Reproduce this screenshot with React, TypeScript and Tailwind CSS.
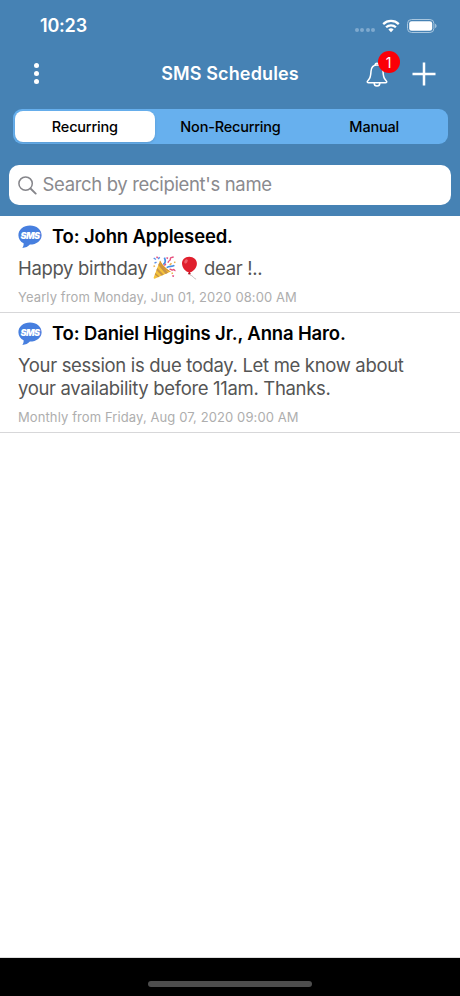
import React from 'react'

interface Schedule {
  id: number
  recipients: string
  message: React.ReactNode
  timing: string
}

const tabs = ['Recurring', 'Non-Recurring', 'Manual']

/* ***** Icons ***** */
const WifiIcon = () => (
  <svg className="h-[14px] w-[18px]" viewBox="0 0 18 14" fill="none" stroke="#fff" strokeWidth="2.3">
    <path d="M1.2 5.1a11.2 11.2 0 0 1 15.6 0" />
    <path d="M4.1 8.3a7 7 0 0 1 9.8 0" />
    <path d="M9 13.2 6.4 10.5a3.9 3.9 0 0 1 5.2 0Z" fill="#fff" stroke="none" />
  </svg>
)

const BatteryIcon = () => (
  <svg className="h-[14px] w-[30px]" viewBox="0 0 30 14">
    <rect x="0.5" y="0.5" width="26.4" height="13" rx="4" fill="none" stroke="#a9c7df" />
    <rect x="2.2" y="2.2" width="23" height="9.6" rx="2.4" fill="#fff" />
    <path d="M28.1 4.8c1.9.7 1.9 3.7 0 4.4Z" fill="#a9c7df" />
  </svg>
)

const BellIcon = () => (
  <svg
    className="h-[26px] w-[22px]"
    viewBox="0 0 22 26"
    fill="none"
    stroke="#fff"
    strokeWidth="1.5"
    strokeLinecap="round"
    strokeLinejoin="round"
  >
    <path d="M9.2 4.1a1.8 1.8 0 1 1 3.6 0" />
    <path d="M11 4C7.3 4 5.2 6.6 5 10.4c-.2 4-.5 6-2 7.9-.8 1-1.8 1.7-1.8 2.5 0 .6.5.9 1.2.9h17.2c.7 0 1.2-.3 1.2-.9 0-.8-1-1.5-1.8-2.5-1.5-1.9-1.8-3.9-2-7.9C16.8 6.6 14.7 4 11 4Z" />
    <path d="M8.2 22.2a2.8 2.8 0 0 0 5.6 0" />
  </svg>
)

const PlusIcon = () => (
  <svg className="h-6 w-6" viewBox="0 0 24 24" stroke="#fff" strokeWidth="2.5">
    <path d="M12 0.5v23M0.5 12h23" />
  </svg>
)

const SearchIcon = () => (
  <svg
    className="h-[19px] w-[19px]"
    viewBox="0 0 19 19"
    fill="none"
    stroke="#85858a"
    strokeWidth="1.5"
    strokeLinecap="round"
  >
    <circle cx="7.6" cy="7.6" r="6.7" />
    <path d="m12.5 12.5 5.2 5.1" strokeWidth="1.9" />
  </svg>
)

const SmsIcon = () => (
  <svg className="h-6 w-6 shrink-0 overflow-visible" viewBox="0 0 24 24">
    <path
      d="M12 .6C5.5.6.4 4.8.4 10.2c0 3.5 2 6.5 5.2 8.1.2 1.8-.3 3.3-1.3 4.8 3.3-.3 5.9-1.5 7.6-3.5 6.6 0 11.7-4 11.7-9.4C23.6 4.8 18.5.6 12 .6Z"
      fill="#477fdf"
    />
    <text
      x="11.9"
      y="13.6"
      textAnchor="middle"
      fontFamily="Inter, sans-serif"
      fontSize="9"
      fontWeight="900"
      fontStyle="italic"
      letterSpacing="-0.6"
      fill="#fff"
    >
      SMS
    </text>
  </svg>
)

const PartyPopper = () => (
  <svg className="-my-px inline-block h-6 w-6 align-top" viewBox="0 0 24 24" fill="none">
    <path d="M8 4.5 1.8 21.3c-.4 1.2.3 1.7 1.4 1.2L19 15.5C15.5 14.5 10 9.5 8 4.5Z" fill="#f5c33b" />
    <path d="m6.3 9 7.3 8.9 2.6-1.2L7.2 6.7ZM4.4 14.3l5.3 5.3 2.1-.9-6.6-6.7ZM2.8 18.6l3.3 2.6 1.3-.6-4-3.7Z" fill="#c79448" />
    <path d="M8 4.5c-1.6 3.7 6.3 12.3 11 11-2.5-1-8.5-6-11-11Z" fill="#db9630" />
    <path d="M11.3 8.5c2.4-1.5 2.3-4.2 1.1-6.9M14.7 11.6c3-2 5.1-.5 7.7-2.2" stroke="#468ee4" strokeWidth="1.7" />
    <path d="M16.2 6.8c-.5-2.5 2.6-1.6 2.2-3.9s2.4-.7 3.2-2.2M17.5 13.5c1.5-1.2 2 1.3 3.5.3s1.3 1.3 2.4.6" stroke="#e6517e" strokeWidth="1.4" />
    <path d="m1.7 2 2.2 1.5M2.5 7.2l2-1M7.7 1.3 6.1 3" stroke="#5b8fe7" strokeWidth="1.5" />
    <path d="m4.6.7 1 1.5M14.5 1.7l1.5.8M12.4 9.6l1.4-1.9M20.3 19.7l1.7.5" stroke="#e34f84" strokeWidth="1.5" />
    <path d="m17.8 9 1.7-1.8M22 6.6l1.4-.6M19.5 17.5l1.4-.5M1.5 10.5l1.5-.7" stroke="#eab04b" strokeWidth="1.4" />
  </svg>
)

const Balloon = () => (
  <svg className="-my-px -mr-[2.5px] ml-[1.5px] inline-block h-6 w-6 align-top" viewBox="0 0 24 24" fill="none">
    <path d="M11.3 17.3c-.3 2.4 2.5 1.7 3.6 3.3.8 1.1 1.5 2 3.2 2.5" stroke="#b8b0b0" strokeWidth="0.8" />
    <path d="M11.2.7C6.8.7 3.9 3.7 4 7.6c.1 4.2 3.8 8.8 7.2 8.8s7.600-4.200 7.700-8.600C19 3.700 15.700.7 11.200.7Z" fill="#e01f2d" />
    <path d="m11 16-1.2 2.2h3.1L11.9 16Z" fill="#b91523" />
    <ellipse cx="8" cy="5.4" rx="1.5" ry="2.2" transform="rotate(35 8 5.4)" fill="#f0606a" />
  </svg>
)

const schedules: Schedule[] = [
  {
    id: 1,
    recipients: 'John Appleseed.',
    message: (
      <>
        Happy birthday <PartyPopper />
        <Balloon /> dear !..
      </>
    ),
    timing: 'Yearly from Monday, Jun 01, 2020 08:00 AM',
  },
  {
    id: 2,
    recipients: 'Daniel Higgins Jr., Anna Haro.',
    message: (
      <>
        Your session is due today. Let me know about
        <br />
        your availability before 11am. Thanks.
      </>
    ),
    timing: 'Monthly from Friday, Aug 07, 2020 09:00 AM',
  },
]

const StatusBar = () => (
  <div className="flex h-[51px] items-center pr-[23px] pl-10">
    <span className="text-[18px] font-semibold tracking-[-0.2px]">10:23</span>
    <div className="ml-auto flex items-center">
      <div className="mt-[8px] mr-[7px] flex gap-[1.5px]">
        {[0, 1, 2, 3].map((dot) => (
          <span key={dot} className="size-[4px] rounded-full bg-[#7fa9ce]" />
        ))}
      </div>
      <WifiIcon />
      <div className="ml-[7px]">
        <BatteryIcon />
      </div>
    </div>
  </div>
)

const NavBar = () => (
  <div className="grid h-[45px] grid-cols-[120px_1fr_120px] items-center">
    <button className="ml-[34px] flex w-[5px] flex-col gap-[3px]" aria-label="Menu">
      <span className="size-[5px] rounded-full bg-white" />
      <span className="size-[5px] rounded-full bg-white" />
      <span className="size-[5px] rounded-full bg-white" />
    </button>
    <h1 className="text-center text-[18px] font-semibold tracking-[0.12px]">SMS Schedules</h1>
    <div className="flex items-center justify-end gap-[24px] pr-6">
      <button className="relative" aria-label="Notifications">
        <BellIcon />
        <span className="absolute -top-[9.5px] left-[11.5px] flex size-[22px] items-center justify-center rounded-full bg-[#fb0007] text-[14px]">
          1
        </span>
      </button>
      <button aria-label="Add schedule">
        <PlusIcon />
      </button>
    </div>
  </div>
)

const ScheduleRow = ({ recipients, message, timing }: Schedule) => (
  <li className="border-b border-[#d7d7d9] pt-[9px] pr-4 pb-[6px] pl-[18px]">
    <div className="flex h-6 items-center gap-[10px]">
      <SmsIcon />
      <h2 className="text-[18.5px] font-semibold tracking-[-0.15px] text-black">To: {recipients}</h2>
    </div>
    <p className="mt-[8px] text-[18.5px] leading-[22.5px] tracking-[-0.33px] whitespace-nowrap text-[#555]">
      {message}
    </p>
    <p className="mt-[8.5px] text-[13px] leading-[18px] tracking-[0.1px] text-[#aeaeae]">{timing}</p>
  </li>
)

const App = () => {
  return (
    <div className="flex h-[996px] w-[460px] flex-col overflow-hidden bg-white font-['Inter',sans-serif]">
      <header className="h-[216px] shrink-0 bg-[#4682b4] text-white">
        <StatusBar />
        <NavBar />

        {/* ***** Segmented control ***** */}
        <div className="mt-[13px] ml-[13px] grid h-[35px] w-[435px] grid-cols-3 rounded-[9px] bg-[#67b0ee] p-[2px] text-[14.5px] font-medium tracking-[-0.2px] text-black">
          {tabs.map((tab, index) => (
            <button
              key={tab}
              className={
                index === 0
                  ? 'mr-[4px] rounded-[8px] bg-white shadow-sm'
                  : 'rounded-[8px]'
              }
            >
              {tab}
            </button>
          ))}
        </div>

        {/* ***** Search ***** */}
        <div className="mx-[9px] mt-[21px] flex h-10 items-center gap-[6px] rounded-[10px] bg-white pl-[8.5px]">
          <SearchIcon />
          <span className="text-[18.5px] tracking-[-0.34px] text-[#8a8a8e]">Search by recipient's name</span>
        </div>
      </header>

      <ul className="flex-1">
        {schedules.map((schedule) => (
          <ScheduleRow key={schedule.id} {...schedule} />
        ))}
      </ul>

      {/* ***** Home indicator ***** */}
      <footer className="flex h-[39px] shrink-0 justify-center border-t border-[#dedede] bg-black pt-[23px]">
        <div className="h-[6px] w-[164px] rounded-full bg-[#4d4d4d]" />
      </footer>
    </div>
  )
}

export default App
